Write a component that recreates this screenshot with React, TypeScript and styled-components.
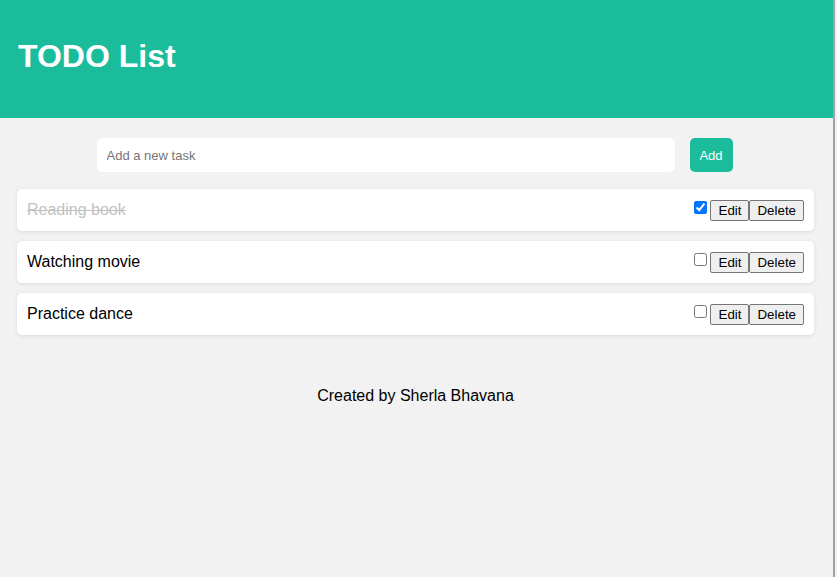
import { useState } from "react";
import styled, { createGlobalStyle } from "styled-components";

const GlobalStyle = createGlobalStyle`
  html, body {
    margin: 0;
    padding: 0;
    background: #f0f0f0;
    font-family: "Liberation Sans", Arial, sans-serif;
  }
`;

type Task = { id: number; text: string; done: boolean };

const initialTasks: Task[] = [
  { id: 1, text: "Reading book", done: true },
  { id: 2, text: "Watching movie", done: false },
  { id: 3, text: "Practice dance", done: false },
];

export default function App() {
  const [tasks, setTasks] = useState<Task[]>(initialTasks);
  const [value, setValue] = useState("");

  function addTask() {
    if (!value.trim()) return;
    setTasks((prev) => [...prev, { id: Date.now(), text: value, done: false }]);
    setValue("");
  }

  function toggle(id: number) {
    setTasks((prev) =>
      prev.map((t) => (t.id === id ? { ...t, done: !t.done } : t))
    );
  }

  function remove(id: number) {
    setTasks((prev) => prev.filter((t) => t.id !== id));
  }

  return (
    <Page>
      <GlobalStyle />
      <Header>
        <Title>TODO List</Title>
      </Header>
      <Form>
        <TaskInput
          placeholder="Add a new task"
          value={value}
          onChange={(e) => setValue(e.target.value)}
        />
        <AddButton onClick={addTask}>Add</AddButton>
      </Form>
      <List>
        {tasks.map((task) => (
          <Item key={task.id}>
            <ItemText done={task.done}>{task.text}</ItemText>
            <Actions>
              <Check
                type="checkbox"
                checked={task.done}
                onChange={() => toggle(task.id)}
              />
              <SmallButton>Edit</SmallButton>
              <SmallButton onClick={() => remove(task.id)}>Delete</SmallButton>
            </Actions>
          </Item>
        ))}
      </List>
      <Footer>Created by Sherla Bhavana</Footer>
    </Page>
  );
}

const Page = styled.div`
  width: 835px;
  min-height: 577px;
  background: #f2f2f2;
  border-right: 2px solid #a3a3a3;
  box-sizing: border-box;
`;

const Header = styled.header`
  background: #1abc9c;
  height: 118px;
  display: flex;
  align-items: center;
  padding: 0 18px;
`;

const Title = styled.h1`
  margin: 0;
  margin-top: -5px;
  color: #fff;
  font-size: 32px;
  font-weight: 700;
`;

const Form = styled.div`
  display: flex;
  justify-content: center;
  gap: 15px;
  margin-top: 20px;
  padding-right: 4px;
`;

const TaskInput = styled.input`
  width: 578px;
  height: 34px;
  box-sizing: border-box;
  border: none;
  border-radius: 5px;
  background: #fff;
  padding: 0 10px;
  font-family: "Liberation Sans", Arial, sans-serif;
  font-size: 13px;
  outline: none;

  &::placeholder {
    color: #757575;
  }
`;

const AddButton = styled.button`
  width: 43px;
  height: 34px;
  border: none;
  border-radius: 5px;
  background: #1abc9c;
  color: #fff;
  font-family: "Liberation Sans", Arial, sans-serif;
  font-size: 13px;
  cursor: pointer;
`;

const List = styled.div`
  display: flex;
  flex-direction: column;
  gap: 10px;
  margin-top: 17px;
  padding: 0 19px 0 17px;
`;

const Item = styled.div`
  height: 42px;
  background: #fff;
  border-radius: 5px;
  box-shadow: 0 1px 4px rgba(0, 0, 0, 0.1);
  display: flex;
  align-items: center;
  justify-content: space-between;
  padding: 0 10px;
`;

const ItemText = styled.span<{ done: boolean }>`
  font-size: 16px;
  color: ${(p) => (p.done ? "#c2c2c2" : "#000")};
  text-decoration: ${(p) => (p.done ? "line-through" : "none")};
`;

const Actions = styled.div`
  display: flex;
  align-items: center;
`;

const Check = styled.input`
  margin: 0 3px 0 0;
  width: 13px;
  height: 13px;
  position: relative;
  top: -3px;
`;

const SmallButton = styled.button`
  font-family: "Liberation Sans", Arial, sans-serif;
  font-size: 13.33px;
  padding: 1px 7px;
  height: 21px;
  border: 1px solid #767676;
  border-radius: 2px;
  background: #efefef;
  color: #000;
  &:first-of-type {
    padding-left: 8px;
  }
`;

const Footer = styled.footer`
  text-align: center;
  font-size: 16px;
  margin-top: 52px;
  padding-right: 2px;
`;
